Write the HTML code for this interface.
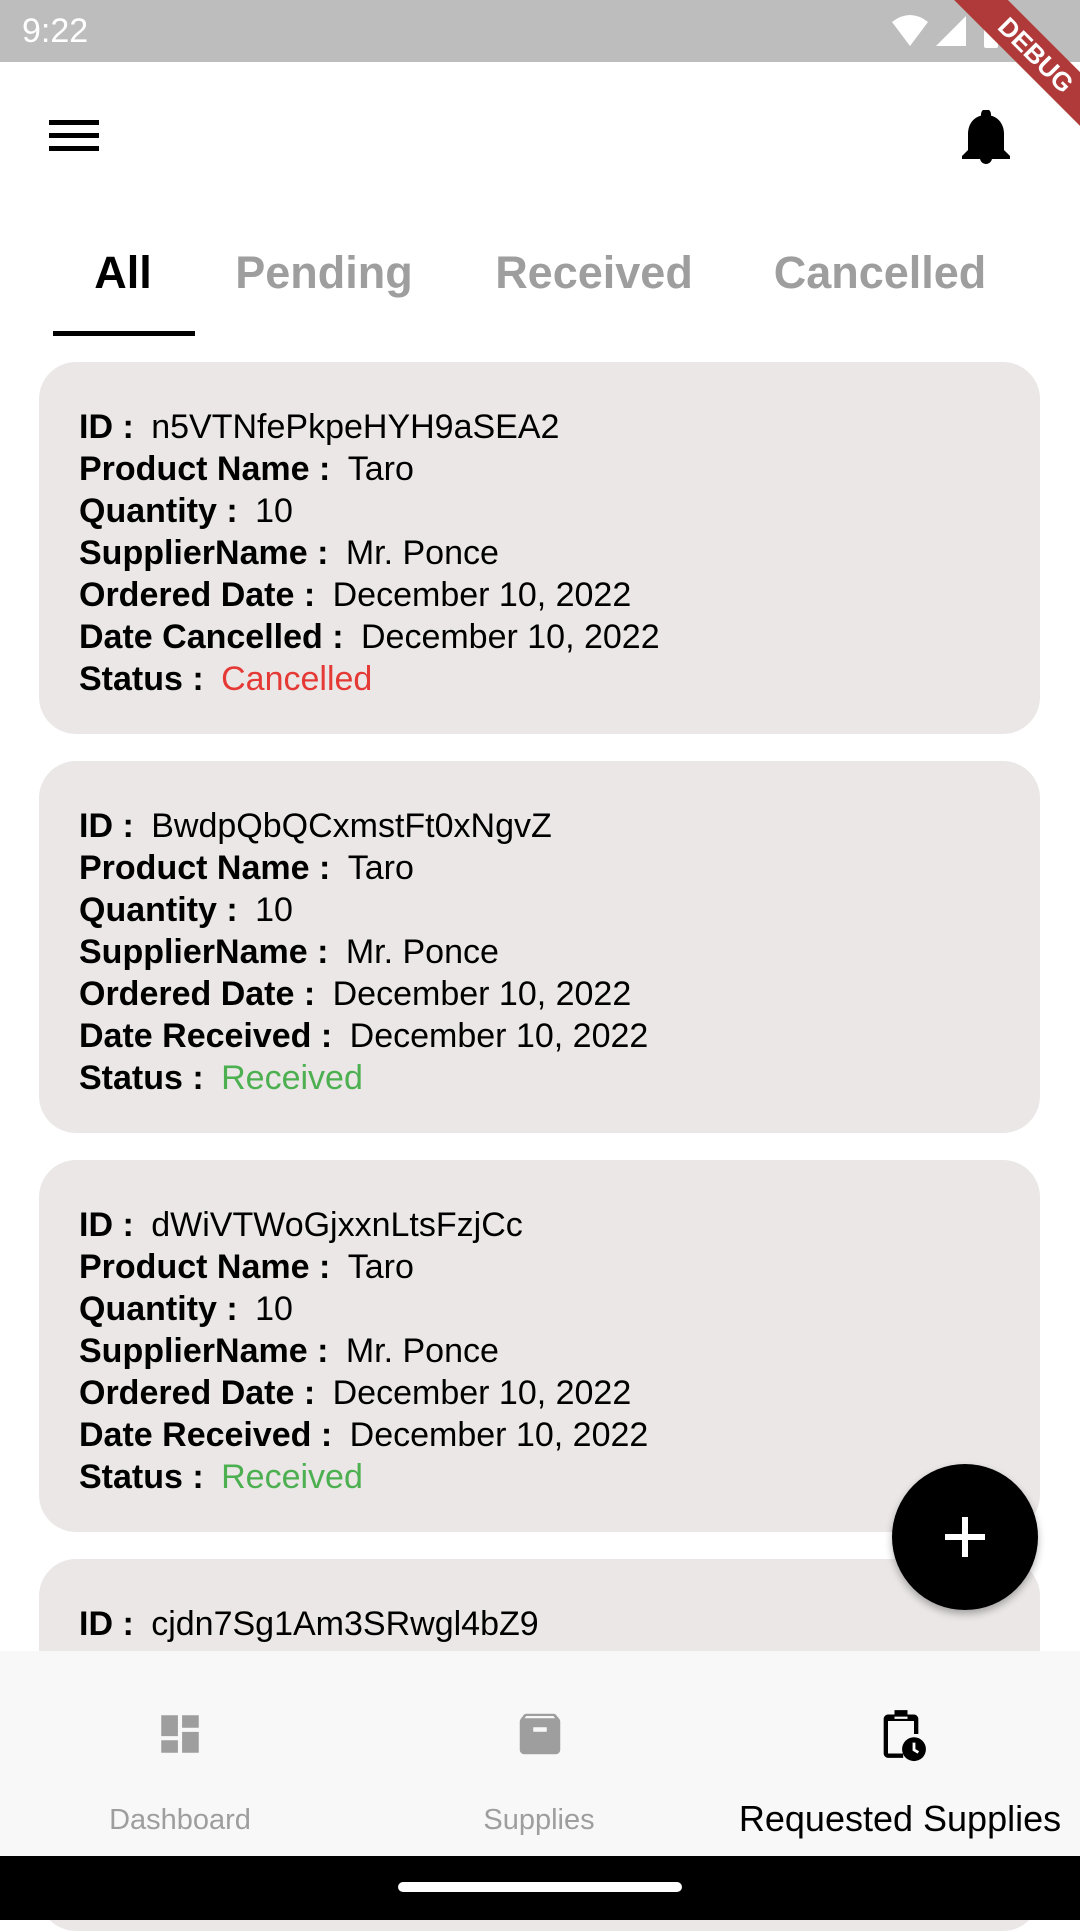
<!DOCTYPE html>
<html><head><meta charset="utf-8"><style>
*{margin:0;padding:0;box-sizing:border-box}
body{width:1080px;height:1920px;overflow:hidden;background:#fff;font-family:"Liberation Sans",Roboto,sans-serif;position:relative;color:#000}
.sb{position:absolute;left:0;top:0;width:1080px;height:62px;background:#bdbdbd;color:#fff;font-size:34px}
.tabs{position:absolute;top:247px;left:0;width:1080px;height:60px;font-weight:bold;font-size:45px;color:#9e9e9e}
.tabs span{position:absolute;top:0;transform:translateX(-50%)}
.card{position:absolute;left:39px;width:1001px;height:372px;background:#ebe7e7;border-radius:37px;padding:44px 0 0 40px;font-size:34px;line-height:42px}
.card b{font-weight:bold;margin-right:8px}
.nav{position:absolute;left:0;top:1651px;width:1080px;height:205px;background:#f8f8f8}
.lab{position:absolute;transform:translateX(-50%);white-space:nowrap}
</style></head><body>
<div class="sb"><span style="position:absolute;left:22px;top:12px">9:22</span>
<svg style="position:absolute;left:890px;top:12px" width="120" height="40" viewBox="0 0 120 40"><path d="M2 10 Q20 -4 38 10 L20 34Z" fill="#fff"/><path d="M46 34 L76 4 L76 34Z" fill="#fff"/><rect x="94" y="6" width="14" height="30" rx="2" fill="#fff"/><rect x="98" y="2" width="6" height="5" fill="#fff"/></svg>
</div>
<div style="position:absolute;right:0;top:0;width:150px;height:150px;overflow:hidden"><div style="position:absolute;left:-4px;top:36px;width:220px;height:38px;background:#b03a3a;transform:rotate(45deg);color:#fff;font-weight:bold;font-size:26px;text-align:center;line-height:38px">DEBUG</div></div>
<svg style="position:absolute;left:49px;top:118px" width="50" height="36" viewBox="0 0 50 36"><rect y="2" width="50" height="5" fill="#000"/><rect y="15" width="50" height="5" fill="#000"/><rect y="28" width="50" height="5" fill="#000"/></svg>
<svg style="position:absolute;left:962px;top:110px" width="48" height="54" viewBox="0 0 24 27"><path d="M12 27c1.6 0 3-1.3 3-3h-6c0 1.7 1.4 3 3 3zm9-7V12c0-4.5-2.4-8.2-6.5-9.2V2a2.5 2.5 0 0 0-5 0v.8C5.4 3.8 3 7.5 3 12v8l-3 3v1.5h24V23z" fill="#000"/></svg>
<div class="tabs"><span style="left:123px;color:#000">All</span><span style="left:324px">Pending</span><span style="left:594px">Received</span><span style="left:880px">Cancelled</span></div>
<div style="position:absolute;left:53px;top:331px;width:142px;height:5px;background:#000"></div>
<div class="card" style="top:362px;width:1001px"><b>ID : </b> n5VTNfePkpeHYH9aSEA2<br><b>Product Name : </b> Taro<br><b>Quantity : </b> 10<br><b>SupplierName : </b> Mr. Ponce<br><b>Ordered Date : </b> December 10, 2022<br><b>Date Cancelled : </b> December 10, 2022<br><b>Status : </b> <span style="color:#e53935">Cancelled</span></div>
<div class="card" style="top:761px"><b>ID : </b> BwdpQbQCxmstFt0xNgvZ<br><b>Product Name : </b> Taro<br><b>Quantity : </b> 10<br><b>SupplierName : </b> Mr. Ponce<br><b>Ordered Date : </b> December 10, 2022<br><b>Date Received : </b> December 10, 2022<br><b>Status : </b> <span style="color:#4caf50">Received</span></div>
<div class="card" style="top:1160px"><b>ID : </b> dWiVTWoGjxxnLtsFzjCc<br><b>Product Name : </b> Taro<br><b>Quantity : </b> 10<br><b>SupplierName : </b> Mr. Ponce<br><b>Ordered Date : </b> December 10, 2022<br><b>Date Received : </b> December 10, 2022<br><b>Status : </b> <span style="color:#4caf50">Received</span></div>
<div class="card" style="top:1559px"><b>ID : </b> cjdn7Sg1Am3SRwgl4bZ9<br><b>Product Name : </b> Coffee</div>
<div style="position:absolute;left:892px;top:1464px;width:146px;height:146px;border-radius:50%;background:#000;box-shadow:0 4px 8px rgba(0,0,0,.3)"><div style="position:absolute;left:53px;top:70px;width:40px;height:6px;background:#fff"></div><div style="position:absolute;left:70px;top:53px;width:6px;height:40px;background:#fff"></div></div>
<div class="nav">
<svg style="position:absolute;left:155px;top:58px" width="50" height="50" viewBox="0 0 24 24"><path d="M3 13h8V3H3zm0 8h8v-6H3zm10 0h8V11h-8zm0-18v6h8V3z" fill="#9e9e9e"/></svg>
<svg style="position:absolute;left:513px;top:56px" width="54" height="54" viewBox="0 0 24 24"><path d="M20.5 5.2l-1.4-1.7C18.9 3.2 18.5 3 18 3H6c-.5 0-.9.2-1.2.5L3.5 5.2C3.2 5.6 3 6 3 6.5V19c0 1.1.9 2 2 2h14c1.1 0 2-.9 2-2V6.5c0-.5-.2-.9-.5-1.3zM5.1 5l.8-1h12l.9 1zM15 11H9V9h6z" fill="#9e9e9e"/></svg>
<svg style="position:absolute;left:875px;top:54px" width="52" height="58" viewBox="0 0 24 26"><path d="M9 2h6v3H9z M6 4h3v2h6V4h3c1 0 2 1 2 2v7h-2V7H6v15h7v2H6c-1 0-2-1-2-2V6c0-1 1-2 2-2z" fill="#000"/><circle cx="18" cy="20" r="5.5" fill="#000"/><path d="M18 17v3.3l2 1.2" stroke="#fff" stroke-width="1.3" fill="none"/></svg>
<div class="lab" style="left:180px;top:153px;font-size:29px;color:#9e9e9e">Dashboard</div>
<div class="lab" style="left:539px;top:153px;font-size:29px;color:#9e9e9e">Supplies</div>
<div class="lab" style="left:900px;top:147px;font-size:36px;color:#000">Requested Supplies</div>
</div>
<div style="position:absolute;left:0;top:1856px;width:1080px;height:64px;background:#000"><div style="position:absolute;left:398px;top:26px;width:284px;height:10px;border-radius:5px;background:#fff"></div></div>
</body></html>
